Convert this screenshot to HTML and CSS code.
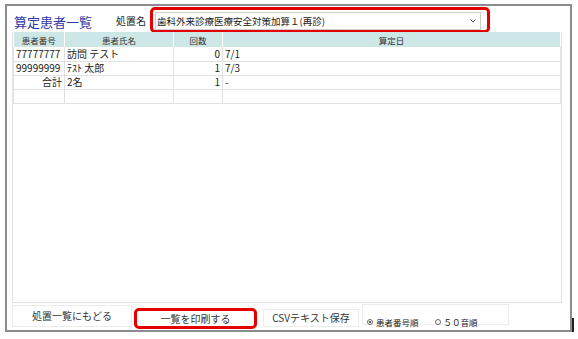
FILE: index.html
```html
<!DOCTYPE html>
<html lang="ja">

<head>
    <meta charset="UTF-8" />
    <title>算定患者一覧</title>
    <link rel="stylesheet" href="styles.css">
</head>

<body>
    <div class="frame">
        <div class="top-row">
            <h1 class="title">算定患者一覧</h1>
            <span class="label">処置名</span>
            <div class="highlight select-box">
                <div class="select">
                    <span>歯科外来診療医療安全対策加算１(再診)</span>
                    <svg class="chevron" width="6" height="4" viewBox="0 0 6 4">
                        <polyline points="0.5,0.5 3,3 5.5,0.5" fill="none" stroke="#555" stroke-width="1" />
                    </svg>
                </div>
            </div>
        </div>

        <div class="panel">
            <table class="list">
                <colgroup>
                    <col class="c-no">
                    <col class="c-name">
                    <col class="c-count">
                    <col>
                </colgroup>
                <thead>
                    <tr>
                        <th>患者番号</th>
                        <th>患者氏名</th>
                        <th>回数</th>
                        <th>算定日</th>
                    </tr>
                </thead>
                <tbody>
                    <tr>
                        <td>77777777</td>
                        <td>訪問 テスト</td>
                        <td class="num">0</td>
                        <td>7/1</td>
                    </tr>
                    <tr>
                        <td>99999999</td>
                        <td>ﾃｽﾄ 太郎</td>
                        <td class="num">1</td>
                        <td>7/3</td>
                    </tr>
                    <tr>
                        <td class="num">合計</td>
                        <td>2名</td>
                        <td class="num">1</td>
                        <td>-</td>
                    </tr>
                    <tr>
                        <td></td>
                        <td></td>
                        <td></td>
                        <td></td>
                    </tr>
                </tbody>
            </table>
        </div>

        <div class="bottom-bar">
            <button class="btn btn-back">処置一覧にもどる</button>
            <div class="highlight print-box">
                <button class="btn btn-print">一覧を印刷する</button>
            </div>
            <button class="btn btn-csv">CSVテキスト保存</button>
            <div class="sort-group">
                <label class="radio"><span class="dot checked"></span>患者番号順</label>
                <label class="radio"><span class="dot"></span>５０音順</label>
            </div>
        </div>

        <div class="edge-mark"></div>
    </div>
</body>

</html>
```

FILE: styles.css
```css
* {
    box-sizing: border-box;
    margin: 0;
    padding: 0;
}

body {
    background: #fff;
    font-family: "Noto Sans CJK JP", "Noto Sans", sans-serif;
    color: #222;
}

.frame {
    position: relative;
    margin: 4px 0 0 5px;
    width: 567px;
    height: 328px;
    border: 2px solid #8c8c8c;
    display: flex;
    flex-direction: column;
}

/* header line */
.top-row {
    height: 26px;
    display: flex;
    align-items: flex-start;
    padding-left: 7px;
}

.title {
    font-size: 13px;
    font-weight: normal;
    color: #2a3aa6;
    margin-top: 7px;
    line-height: 17px;
    width: 102px;
}

.label {
    font-size: 10px;
    line-height: 14px;
    margin-top: 8px;
    width: 34px;
}

.highlight {
    border: 3px solid #e50000;
    border-radius: 5px;
}

.select-box {
    width: 340px;
    height: 26px;
    margin-top: 1px;
    padding: 2px 6px 0 2px;
}

.select {
    height: 18px;
    border: 1px solid #cfcfcf;
    background: #fff;
    display: flex;
    align-items: center;
    justify-content: space-between;
    padding: 0 4px 0 1px;
    font-size: 9.5px;
}

.chevron {
    display: block;
}

/* list */
.panel {
    height: 271px;
    margin-left: 5px;
    width: 550px;
    border: 1px solid #e2e2e2;
    border-top: none;
}

.list {
    width: 100%;
    border-collapse: collapse;
    table-layout: fixed;
    font-size: 10px;
}

.c-no {
    width: 51px;
}

.c-name {
    width: 109px;
}

.c-count {
    width: 49px;
}

.list th {
    background: #cde6e6;
    font-weight: normal;
    font-size: 8.5px;
    color: #333;
    height: 15px;
    border-right: 1px solid #fff;
}

.list td {
    height: 14px;
    line-height: 12px;
    padding: 0 2px;
    border: 1px solid #e2e2e2;
    border-top: none;
    white-space: nowrap;
    overflow: hidden;
}

.list td.num {
    text-align: right;
}

/* bottom buttons */
.bottom-bar {
    flex: 1;
    display: flex;
    align-items: flex-start;
    padding-left: 5px;
}

.btn {
    display: block;
    font-family: inherit;
    font-size: 10px;
    line-height: 14px;
    color: #333;
    background: #fff;
    border: 1px solid #ececec;
    cursor: pointer;
}

.btn-back {
    width: 120px;
    height: 22px;
    margin-top: 2px;
}

.print-box {
    display: flex;
    width: 123px;
    height: 21px;
    margin: 5px 0 0 2px;
    padding: 0 4px;
}

.btn-print {
    width: 100%;
    height: 15px;
    border: none;
}

.btn-csv {
    width: 96px;
    height: 18px;
    margin: 6px 0 0 6px;
}

.sort-group {
    width: 147px;
    height: 21px;
    margin: 1px 0 0 3px;
    border: 1px solid #ececec;
    display: flex;
    align-items: flex-end;
    gap: 16px;
    padding: 0 0 0 4px;
    font-size: 8.5px;
}

.radio {
    display: flex;
    align-items: center;
    gap: 3px;
    line-height: 10px;
    margin-bottom: -3px;
}

.dot {
    width: 6px;
    height: 6px;
    border: 1px solid #666;
    border-radius: 50%;
    position: relative;
}

.dot.checked::after {
    content: "";
    position: absolute;
    left: 1px;
    top: 1px;
    width: 2px;
    height: 2px;
    border-radius: 50%;
    background: #222;
}

.edge-mark {
    position: absolute;
    right: -4px;
    top: 312px;
    width: 2px;
    height: 17px;
    background: #222;
}
```
